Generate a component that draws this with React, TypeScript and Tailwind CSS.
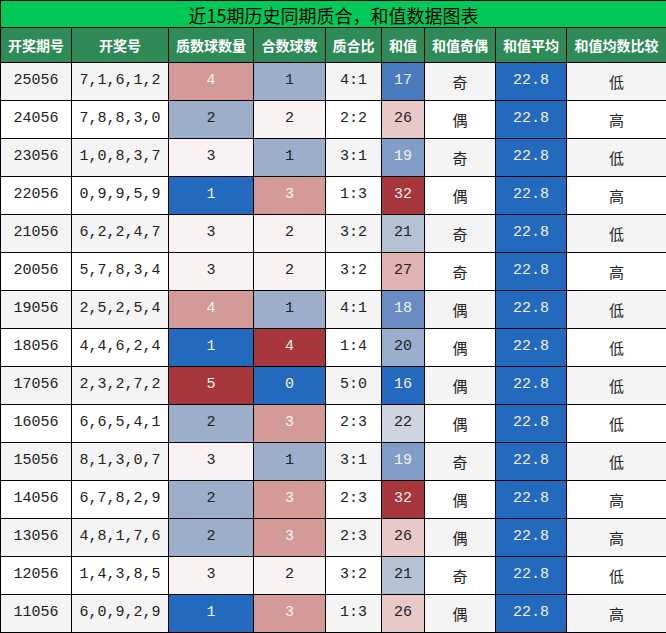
import React from "react";

type Row = [string, string, number, number, string, number, string, string];

const rows: Row[] = [
  ["25056", "7,1,6,1,2", 4, 1, "4:1", 17, "奇", "低"],
  ["24056", "7,8,8,3,0", 2, 2, "2:2", 26, "偶", "高"],
  ["23056", "1,0,8,3,7", 3, 1, "3:1", 19, "奇", "低"],
  ["22056", "0,9,9,5,9", 1, 3, "1:3", 32, "偶", "高"],
  ["21056", "6,2,2,4,7", 3, 2, "3:2", 21, "奇", "低"],
  ["20056", "5,7,8,3,4", 3, 2, "3:2", 27, "奇", "高"],
  ["19056", "2,5,2,5,4", 4, 1, "4:1", 18, "偶", "低"],
  ["18056", "4,4,6,2,4", 1, 4, "1:4", 20, "偶", "低"],
  ["17056", "2,3,2,7,2", 5, 0, "5:0", 16, "偶", "低"],
  ["16056", "6,6,5,4,1", 2, 3, "2:3", 22, "偶", "低"],
  ["15056", "8,1,3,0,7", 3, 1, "3:1", 19, "奇", "低"],
  ["14056", "6,7,8,2,9", 2, 3, "2:3", 32, "偶", "高"],
  ["13056", "4,8,1,7,6", 2, 3, "2:3", 26, "偶", "高"],
  ["12056", "1,4,3,8,5", 3, 2, "3:2", 21, "奇", "低"],
  ["11056", "6,0,9,2,9", 1, 3, "1:3", 26, "偶", "高"],
];

const primeColor: Record<number, string> = {
  1: "bg-[#2369bd] text-[#f2f2f2]",
  2: "bg-[#9caec9] text-[#222]",
  3: "bg-[#f8f2f2] text-[#222]",
  4: "bg-[#d39a97] text-[#f5f5f5]",
  5: "bg-[#a8373d] text-[#f2f2f2]",
};

const compColor: Record<number, string> = {
  0: "bg-[#2369bd] text-[#f2f2f2]",
  1: "bg-[#9caec9] text-[#222]",
  2: "bg-[#f8f2f2] text-[#222]",
  3: "bg-[#d39a97] text-[#f5f5f5]",
  4: "bg-[#a8373d] text-[#f2f2f2]",
};

const sumColor: Record<number, string> = {
  16: "bg-[#2369bd] text-[#f2f2f2]",
  17: "bg-[#4a7bbf] text-[#f2f2f2]",
  18: "bg-[#6a8cc2] text-[#f2f2f2]",
  19: "bg-[#809dc8] text-[#f2f2f2]",
  20: "bg-[#9aaecd] text-[#222]",
  21: "bg-[#b5c2d6] text-[#222]",
  22: "bg-[#d0d4e0] text-[#222]",
  26: "bg-[#e9c9c8] text-[#222]",
  27: "bg-[#e0b2b0] text-[#222]",
  32: "bg-[#a8373d] text-[#f2f2f2]",
};

const headers = ["开奖期号", "开奖号", "质数球数量", "合数球数", "质合比", "和值", "和值奇偶", "和值平均", "和值均数比较"];
const widths = ["w-[71px]", "w-[97px]", "w-[85px]", "w-[72px]", "w-[56px]", "w-[43px]", "w-[71px]", "w-[71px]", "w-[100px]"];

const mono = "font-['Liberation_Mono','DejaVu_Sans_Mono',monospace] text-[15px]";
const cjk = "font-['Noto_Sans_CJK_SC','Noto_Sans',sans-serif]";
const cell = "border border-black text-center p-0";

export default function App() {
  return (
    <div className="w-[666px] h-[633px] bg-white">
      <table className="w-[666px] table-fixed border-collapse">
        <colgroup>
          {widths.map((w, i) => (
            <col key={i} className={w} />
          ))}
        </colgroup>
        <thead>
          <tr className="h-[27px]">
            <th colSpan={9} className={`${cell} ${cjk} bg-[#00c957] text-black text-[18px] font-normal leading-none pt-[2px]`}>
              近15期历史同期质合，和值数据图表
            </th>
          </tr>
          <tr className="h-[35px]">
            {headers.map((h) => (
              <th key={h} className={`${cell} ${cjk} bg-[#2e8b57] text-white text-[14px] font-bold`}>
                {h}
              </th>
            ))}
          </tr>
        </thead>
        <tbody>
          {rows.map((r, i) => {
            const bg = i % 2 === 0 ? "bg-[#f4f4f4]" : "bg-white";
            return (
              <tr key={r[0]} className={`h-[38px] ${bg} text-[#222]`}>
                <td className={`${cell} ${mono}`}>{r[0]}</td>
                <td className={`${cell} ${mono}`}>{r[1]}</td>
                <td className={`${cell} ${mono} ${primeColor[r[2]]}`}>{r[2]}</td>
                <td className={`${cell} ${mono} ${compColor[r[3]]}`}>{r[3]}</td>
                <td className={`${cell} ${mono}`}>{r[4]}</td>
                <td className={`${cell} ${mono} ${sumColor[r[5]]}`}>{r[5]}</td>
                <td className={`${cell} ${cjk} text-[15px] pt-[2px]`}>{r[6]}</td>
                <td className={`${cell} ${mono} bg-[#2369bd] text-[#f2f2f2]`}>22.8</td>
                <td className={`${cell} ${cjk} text-[15px] pt-[2px]`}>{r[7]}</td>
              </tr>
            );
          })}
        </tbody>
      </table>
    </div>
  );
}
